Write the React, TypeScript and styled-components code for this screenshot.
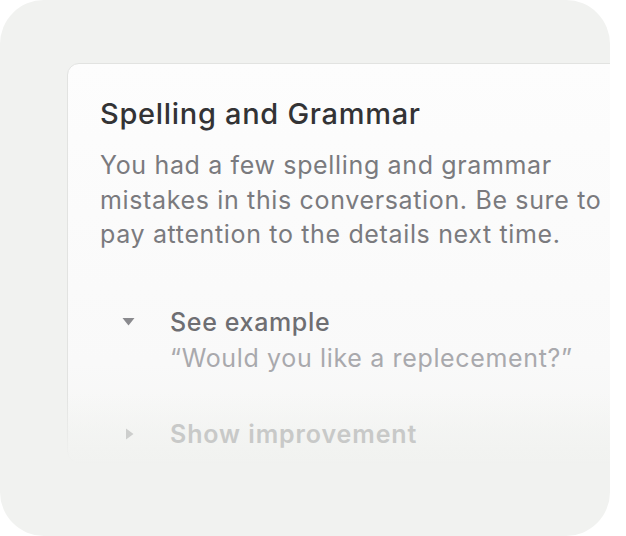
import React from 'react'
import styled, { createGlobalStyle } from 'styled-components'

const GlobalStyle = createGlobalStyle`
  html, body {
    margin: 0;
    padding: 0;
    background: #ffffff;
  }
  body {
    font-family: Inter, "Liberation Sans", sans-serif;
    -webkit-font-smoothing: antialiased;
  }
`

const Panel = styled.div`
  box-sizing: border-box;
  width: 610px;
  height: 536px;
  background: #f1f2f0;
  border-radius: 44px;
  overflow: hidden;
  padding: 63px 0 0 67px;
`

const Card = styled.div`
  position: relative;
  box-sizing: border-box;
  width: 600px;
  height: 400px;
  background: linear-gradient(to bottom, #fdfdfd 0%, #f9f9f9 75%, #f5f6f4 100%);
  border: 1px solid #e2e3e1;
  border-radius: 12px;
  padding: 32px 0 0 32px;
  &::after {
    content: '';
    position: absolute;
    left: -2px;
    right: -2px;
    bottom: -2px;
    height: 70px;
    background: linear-gradient(to bottom, rgba(241, 242, 240, 0) 0%, #f1f2f0 100%);
    pointer-events: none;
  }
`

const Title = styled.h2`
  margin: 0;
  font-size: 29px;
  font-weight: 500;
  line-height: 36px;
  letter-spacing: 0.7px;
  color: #333335;
`

const Body = styled.p`
  margin: 16px 0 0;
  width: 510px;
  font-size: 25px;
  line-height: 34.5px;
  letter-spacing: 0.65px;
  font-weight: 400;
  color: #7a7a7e;
`

const Details = styled.div`
  position: relative;
  z-index: 1;
  display: flex;
  flex-direction: column;
  gap: 40px;
  margin-top: 52px;
  padding-left: 22px;
`

const Row = styled.div`
  display: grid;
  grid-template-columns: 48px 1fr;
  align-items: start;
`

const Caret = styled.div<{ $open?: boolean; $muted?: boolean }>`
  display: flex;
  align-items: center;
  height: 36px;
  padding-left: ${p => (p.$open ? '0' : '3px')};
  color: ${p => (p.$muted ? '#cdcecd' : '#8a8a8e')};
`

const RowLabel = styled.div<{ $muted?: boolean }>`
  font-size: 25px;
  line-height: 36px;
  letter-spacing: ${p => (p.$muted ? '0.9px' : '0.65px')};
  font-weight: ${p => (p.$muted ? 600 : 500)};
  color: ${p => (p.$muted ? '#c8c9c8' : '#6e6e72')};
`

const Quote = styled.div`
  font-size: 25px;
  line-height: 36px;
  letter-spacing: 0.65px;
  color: #a9a9ad;
`

function Triangle({ open }: { open?: boolean }) {
  return open ? (
    <svg width="13" height="9" viewBox="0 0 13 9">
      <path d="M0.5 1 L12.5 1 L6.5 8.5 Z" fill="currentColor" />
    </svg>
  ) : (
    <svg width="9" height="12" viewBox="0 0 9 12">
      <path d="M1 0.5 L8.5 6 L1 11.5 Z" fill="currentColor" />
    </svg>
  )
}

export default function App() {
  return (
    <>
      <GlobalStyle />
      <Panel>
        <Card>
          <Title>Spelling and Grammar</Title>
          <Body>
            You had a few spelling and grammar mistakes in this conversation. Be sure to pay attention to the details next time.
          </Body>
          <Details>
            <Row>
              <Caret $open>
                <Triangle open />
              </Caret>
              <div>
                <RowLabel>See example</RowLabel>
                <Quote>“Would you like a replecement?”</Quote>
              </div>
            </Row>
            <Row>
              <Caret $muted>
                <Triangle />
              </Caret>
              <RowLabel $muted>Show improvement</RowLabel>
            </Row>
          </Details>
        </Card>
      </Panel>
    </>
  )
}
